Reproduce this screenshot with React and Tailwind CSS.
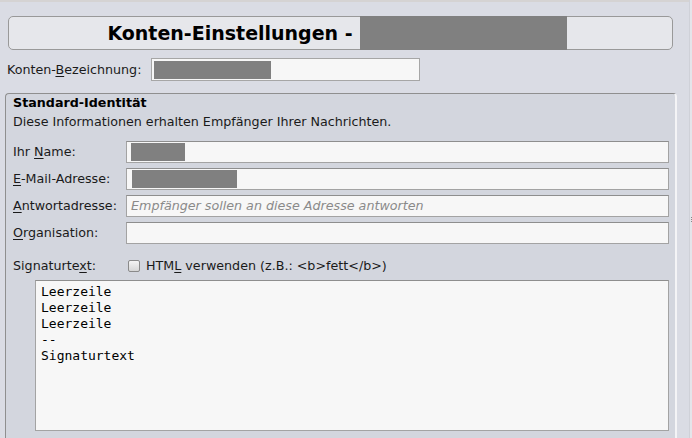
import React from "react";

const U = ({ children }) => <span className="underline underline-offset-2">{children}</span>;

const Field = ({ label, children }) => (
  <div className="flex items-center h-[22px]">
    <div className="w-[113px] shrink-0">{label}</div>
    <div className="flex-1 h-[22px] bg-[#f7f7f7] border border-[#a3a3a3] border-t-[#8e8e8e] flex items-center pl-[4px]">
      {children}
    </div>
  </div>
);

const Redacted = ({ w }) => <div className={`h-[18px] bg-[#808080] ${w}`} />;

const App = () => {
  return (
    <div
      className="w-[692px] h-[438px] overflow-hidden bg-[#dadce4] text-[12.7px] text-[#1a1a1a] flex"
      style={{ fontFamily: '"DejaVu Sans", Verdana, sans-serif' }}
    >
      <div className="flex-1 flex flex-col">
        <div className="h-[2px] bg-[#d5d3d3]" />

        {/* Titel */}
        <div className="pt-[14px] pl-[8px] pr-[16px]">
          <div className="h-[34px] rounded-[5px] border border-[#999] bg-[#e6e7eb] flex items-stretch justify-center pr-[13px]">
            <div className="flex items-center text-[19px] font-bold text-black pr-[7px] pl-[6px]">Konten-Einstellungen -</div>
            <div className="w-[207px] bg-[#808080] -my-px" />
          </div>
        </div>

        {/* Konten-Bezeichnung */}
        <div className="flex items-center mt-[8px] pl-[7px] h-[23px]">
          <div className="w-[144px]">
            Konten-<U>B</U>ezeichnung:
          </div>
          <div className="w-[269px] h-[23px] bg-[#f7f7f7] border border-[#a6a6a6] flex items-center pl-[2px]">
            <Redacted w="w-[117px]" />
          </div>
        </div>

        {/* Standard-Identität */}
        <div className="mt-[12px] ml-[5px] mr-[12px] flex-1 rounded-tl-[4px] rounded-tr-[4px] border-l border-t border-[#8f8f8f] border-r-2 border-r-[#f4f4f6] bg-[#d3d6de] pl-[7px] pr-[6px]">
          <div className="font-bold text-black leading-[15px] mt-[1px]">Standard-Identität</div>
          <div className="mt-[4px] leading-[15px]">Diese Informationen erhalten Empfänger Ihrer Nachrichten.</div>

          <div className="mt-[12px] flex flex-col gap-[5px]">
            <Field label={<>Ihr <U>N</U>ame:</>}>
              <Redacted w="w-[54px]" />
            </Field>
            <Field label={<><U>E</U>-Mail-Adresse:</>}>
              <Redacted w="w-[105px] ml-[1px]" />
            </Field>
            <Field label={<><U>A</U>ntwortadresse:</>}>
              <span className="italic text-[#8a8a8a]">Empfänger sollen an diese Adresse antworten</span>
            </Field>
            <Field label={<><U>O</U>rganisation:</>}>{null}</Field>
          </div>

          <div className="flex items-center mt-[14px] h-[16px]">
            <div className="w-[115px]">
              Signaturte<U>x</U>t:
            </div>
            <div className="w-[12px] h-[12px] rounded-[2px] border border-[#8a8a8a] bg-gradient-to-b from-[#f4f4f4] to-[#d6d6d6]" />
            <div className="ml-[6px]">
              HTM<U>L</U> verwenden (z.B.: &lt;b&gt;fett&lt;/b&gt;)
            </div>
          </div>

          <div
            className="ml-[22px] mt-[6px] h-[151px] bg-[#f7f7f7] border border-[#a3a3a3] border-t-[#8e8e8e] pl-[5px] pt-[3px] text-[13px] leading-[16px] text-black whitespace-pre"
            style={{ fontFamily: '"DejaVu Sans Mono", monospace' }}
          >
            {"Leerzeile\nLeerzeile\nLeerzeile\n--\nSignaturtext"}
          </div>
        </div>
      </div>

      {/* rechter Rand */}
      <div className="w-[3px] bg-[#e4e5ea] border-l border-[#cfd1d8] flex flex-col items-center justify-center">
        <div className="flex flex-col gap-[1px]">
          <div className="w-[1px] h-[1px] bg-[#888]" />
          <div className="w-[1px] h-[1px] bg-[#888]" />
          <div className="w-[1px] h-[1px] bg-[#888]" />
        </div>
      </div>
    </div>
  );
};

export default App;
